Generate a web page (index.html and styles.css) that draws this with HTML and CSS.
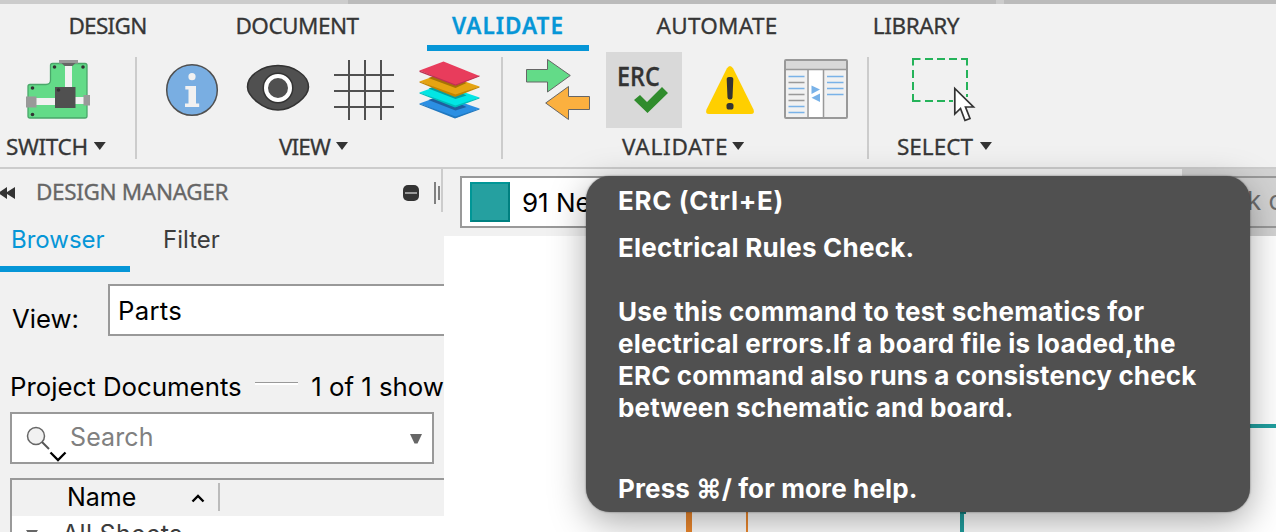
FILE: index.html
```
<!DOCTYPE html>
<html lang="en">
<head>
<meta charset="utf-8">
<title>Design Manager</title>
<link rel="stylesheet" href="styles.css">
</head>
<body>
<div class="app">
  <div class="window-strip"><span class="strip-light"></span><span class="strip-dark"></span><span class="strip-gap"></span><span class="strip-end"></span></div>
  <header class="ribbon">
    <nav class="tabs">
      <span class="tab tab-design">DESIGN</span>
      <span class="tab tab-document">DOCUMENT</span>
      <span class="tab tab-validate">VALIDATE</span>
      <span class="tab tab-automate">AUTOMATE</span>
      <span class="tab tab-library">LIBRARY</span>
    </nav>
    <div class="groups">
      <section class="group group-switch">
        <div class="icons">
          <svg class="icon" viewBox="0 0 76 76">
            <path d="M30.5 13.500 q0-2 2-2 H65 q2 0 2 2 V64 q0 2-2 2 H10 q-2 0-2-2 V34.500 q0-2 2-2 H26 q4.500 0 4.500-4.500z" fill="#63db88" stroke="#4aa76a" stroke-width="1.300"/>
            <path d="M45 12h7v24h-7zM16 46h20v7H16zM55 45h10v7H55z" fill="#f1f1f1"/>
            <path d="M39 8h19v3.500H39zM6 44.500h10.500v11H6zM63.500 43h6.500v10.500h-6.500z" fill="#999"/>
            <path d="M41.500 11h14l-3 3h-8z" fill="#666"/>
            <path d="M35 35h20.500v21H35z" fill="#505050"/>
            <g fill="#333"><circle cx="34.500" cy="15" r="1.800"/><circle cx="63" cy="15" r="1.800"/><circle cx="12.500" cy="36" r="1.800"/><circle cx="12.500" cy="62.500" r="1.800"/><circle cx="38.500" cy="38" r="1.800"/></g>
          </svg>
        </div>
        <div class="group-label"><span class="t-switch">SWITCH</span><i class="caret"></i></div>
      </section>
      <section class="group group-view">
        <div class="icons">
          <svg class="icon" viewBox="0 0 76 76">
            <circle cx="38" cy="38" r="25.300" fill="#79aee2" stroke="#505050" stroke-width="1.500"/>
            <circle cx="38" cy="24.700" r="3.600" fill="#f1f1f1"/>
            <path d="M31.300 34H42v17.500h3.200V55H31v-3.500h3.500v-14h-3.200z" fill="#f1f1f1"/>
          </svg>
          <svg class="icon" viewBox="0 0 76 76">
            <path d="M7.500 35C7.500 23 23 13.500 38 13.500S68.500 23 68.500 35C68.500 44 53 58 38 58S7.500 44 7.500 35Z" fill="#505050" stroke="#333" stroke-width="1.500"/>
            <circle cx="38" cy="36" r="13" fill="#505050" stroke="#333" stroke-width="5"/>
            <circle cx="38" cy="36" r="12" fill="#505050" stroke="#fff" stroke-width="4"/>
          </svg>
          <svg class="icon" viewBox="0 0 76 76">
            <path d="M23 8v60M39 8v60M55 8v60M8 23h60M8 39h60M8 55h60" stroke="#505050" stroke-width="2"/>
          </svg>
          <svg class="icon" viewBox="0.5 0 76 76">
            <path d="M8 51.500l22-8 38 13-24 9.500z" fill="#2b8fe3"/><path d="M8 51.500L44 64.500l24-8v1L43.500 66.500 8 52.500z" fill="#2178bf"/>
            <path d="M17 48l14-5 24 12-11 3.500z" fill="#205f9f"/>
            <path d="M8 40.500l22-8 38 13-24 9.500z" fill="#02e6e4"/><path d="M8 40.500L44 53.500l24-8v1L43.500 55.500 8 41.500z" fill="#00bdbc"/>
            <path d="M17 36.500l14-5 24 12-11 3.500z" fill="#039f9f"/>
            <path d="M8 29.500l22-8 38 13-24 9.500z" fill="#e5a412"/><path d="M8 29.500L44 42.500l24-8v1L43.500 45 8 30.500z" fill="#c28400"/>
            <path d="M17 26l14-5 24 10-11 5z" fill="#a57206"/>
            <path d="M8 18.500L32 9.500 68 24 44 33.500z" fill="#e83c5c"/><path d="M8 18.500L44 32.500l24-9v1L44 33.800 8 20z" fill="#bd3152"/>
          </svg>
        </div>
        <div class="group-label"><span class="t-view">VIEW</span><i class="caret"></i></div>
      </section>
      <section class="group group-validate">
        <div class="icons">
          <svg class="icon" viewBox="0 0 76 76" stroke="#666" stroke-width="1">
            <path d="M6.500 17.500h21V7.500L50.300 23.500 27.500 40V30h-21z" fill="#63db88"/>
            <path d="M69.500 44.500h-21v-10L25.700 51 48.500 67.500v-10h21z" fill="#fbb03f"/>
          </svg>
          <div class="icon active erc">
            <span class="erc-text">ERC</span>
            <svg class="erc-check" viewBox="0 0 36 28"><path d="M1 14l6-5 7 7L29 1l6 6-20.500 20z" fill="#308c2d"/></svg>
          </div>
          <svg class="icon" viewBox="0 0 76 76">
            <path d="M34.800 16.500Q38 11.500 41.200 16.500L61.500 57.500Q63 62 59 62H17Q13 62 14.500 57.500z" fill="#ffcf00"/>
            <path d="M37 25h2q2.500 0 2.300 2.500l-.8 18q-.2 2-2 2h-1q-1.800 0-2-2l-.8-18Q34.500 25 37 25z" fill="#333"/>
            <rect x="34.500" y="51" width="7" height="6.500" rx="2.600" fill="#333"/>
          </svg>
          <svg class="icon" viewBox="0 0 76 76">
            <rect x="7" y="8" width="62" height="58" rx="1" fill="#f1f1f1" stroke="#999" stroke-width="2"/>
            <path d="M8 9h60v8H8z" fill="#d9d9d9"/><path d="M31 18h14v47H31z" fill="#fff"/>
            <path d="M7 17.500h62M30 18v48M45.500 18v48" stroke="#999" stroke-width="1.500"/>
            <path d="M10.500 24.500h16M10.500 36.500h16M10.500 54.500h16M10.500 60.500h16M49 24.500h16.500M49 30.500h16.500M49 36.500h16.500M49 42.500h16.500" stroke="#79b2e8" stroke-width="1.700"/>
            <path d="M10.500 30.500h16M10.500 42.500h16M10.500 48.500h16" stroke="#999" stroke-width="1.700"/>
            <path d="M33.500 33.500l8.500 4-8.500 4.500zM42 41.500l-8.500 4.200 8.500 4.300z" fill="#79b2e8"/>
          </svg>
        </div>
        <div class="group-label"><span class="t-validate">VALIDATE</span><i class="caret"></i></div>
      </section>
      <section class="group group-select">
        <div class="icons">
          <svg class="icon" viewBox="1 0 76 76">
            <path d="M8 13.500V7h7.500M20 7h8M32 7h8M44 7h8M56 7h6v6.500M62 18v8M62 30v8M8 18v8M8 30v8M8 42v7h7.500M20 49h8M32 49h8M44 49h4M62 42v3" fill="none" stroke="#25b35a" stroke-width="2"/>
            <path d="M49.800 36.500V62l5.700-5.500 4.500 12 5-2-4.500-11.500h8z" fill="#fff" stroke="#333" stroke-width="1.700"/>
          </svg>
        </div>
        <div class="group-label"><span class="t-select">SELECT</span><i class="caret"></i></div>
      </section>
    </div>
  </header>
  <div class="workspace">
    <aside class="panel">
      <div class="panel-head">
        <svg class="collapse" viewBox="0 0 16 14"><path d="M7 1v12L-2 7zM15 1v12L5.500 7z" fill="#333"/></svg>
        <span class="panel-title">DESIGN MANAGER</span>
        <svg class="minimize" viewBox="0 0 16 16"><rect width="16" height="16" rx="5" fill="#333"/><path d="M2 8h12" stroke="#999" stroke-width="2"/></svg>
        <svg class="grip" viewBox="0 0 9 44"><path d="M1 13v22M5 17v14" stroke="#808080" stroke-width="2"/><path d="M8 0v43" stroke="#ccc" stroke-width="2"/></svg>
      </div>
      <div class="subtabs"><span class="subtab on"><span class="t-browser">Browser</span></span><span class="subtab"><span class="t-filter">Filter</span></span></div>
      <div class="view-row"><span class="t-viewlabel">View:</span><div class="combo"><span class="t-parts">Parts</span></div></div>
      <div class="docs-row"><span class="t-docs">Project Documents</span><i class="rule"></i><span class="t-count">1 of 1 show</span></div>
      <div class="search">
        <svg class="magnifier" viewBox="0 0 44 40"><circle cx="11" cy="14" r="8.500" fill="#f1f1f1" stroke="#666" stroke-width="1.500"/><path d="M17 20l7 7" stroke="#555" stroke-width="2"/><path d="M25.500 30.500l7.500 7.500 7.500-7.500" fill="none" stroke="#000" stroke-width="2.300"/></svg>
        <span class="t-search">Search</span>
        <svg class="drop" viewBox="0 0 12 10"><path d="M0 0h12L7.500 9.500h-3z" fill="#666"/></svg>
      </div>
      <div class="table">
        <div class="thead"><span class="t-name">Name</span><svg class="sort" viewBox="0 0 14 10"><path d="M1.500 8.500L7 3l5.500 5.500" fill="none" stroke="#000" stroke-width="2.400"/></svg><i class="col-line"></i></div>
        <div class="trow"><svg class="expand" viewBox="0 0 12 10"><path d="M0 0h12L6 9z" fill="#666"/></svg><span class="t-sheets">All Sheets</span></div>
      </div>
    </aside>
    <main class="main">
      <div class="filterbar">
        <div class="netbox"><i class="swatch"></i><span class="t-nets">91 Ne</span></div>
        <div class="cmdzone"><div class="cmdbox"><span>k c</span></div></div>
      </div>
      <svg class="canvas" viewBox="444 236 832 296">
        <path d="M689 500v40" stroke="#ed882d" stroke-width="6"/><path d="M747 500v40" stroke="#ed882d" stroke-width="2"/>
        <path d="M962 500v40M1240 426h40" stroke="#209f9f" stroke-width="4"/><path d="M960 500h6v14h-6z" fill="#168686"/>
      </svg>
    </main>
  </div>
  <div class="tooltip">
    <p class="tip-title">ERC (Ctrl+E)</p>
    <p class="tip-lead">Electrical Rules Check.</p>
    <p class="tip-body"><span class="wide">Use this command to test schematics for</span><br><span class="wide">electrical errors.If a board file is loaded,the</span><br>ERC command also runs a consistency check<br>between schematic and board.</p>
    <p class="tip-help">Press ⌘/ for more help.</p>
  </div>
</div>
</body>
</html>
```
FILE: styles.css
```
* { box-sizing: border-box; }
body { margin: 0; background: #f1f1f1; font-family: Inter, "Liberation Sans", sans-serif; }
svg { display: block; flex: none; }
i { display: block; flex: none; }
span { white-space: nowrap; }
.app { position: relative; width: 1276px; height: 532px; overflow: hidden; display: flex; flex-direction: column; }

.window-strip { display: flex; height: 4px; flex: none; }
.strip-light { width: 348px; background: #ccc; }
.strip-dark { width: 648px; background: #bbb; }
.strip-gap { width: 8px; background: #ccc; }
.strip-end { flex: 1; background: #bbb; }

.ribbon { height: 165px; flex: none; border-bottom: 2px solid #ccc; font-family: "Noto Sans", "Open Sans", sans-serif; font-size: 22.500px; color: #363636; -webkit-text-stroke: .3px; }
.tabs { display: flex; height: 47px; }
.tab { height: 47px; line-height: 43px; text-align: center; }
.tab-design { width: 125px; margin-left: 45px; letter-spacing: -.7px; }
.tab-document { width: 172px; margin-left: 41px; letter-spacing: -.5px; }
.tab-validate { width: 162px; margin-left: 44px; color: #0696d7; font-weight: 600; border-bottom: 6px solid #0696d7; letter-spacing: 1px; }
.tab-automate { width: 170px; margin-left: 43px; letter-spacing: .3px; }
.tab-library { width: 134px; margin-left: 47px; letter-spacing: -.4px; }

.groups { display: flex; height: 116px; }
.group { position: relative; height: 116px; padding-top: 1px; }
.group:not(:last-child)::after { content: ""; position: absolute; right: 0; top: 6px; width: 2px; height: 102px; background: #ccc; }
.group-switch { width: 137px; padding-left: 20px; }
.group-view { width: 366px; padding-left: 17px; }
.group-validate { width: 366px; padding-left: 17px; }
.group-select { width: 200px; padding-left: 37px; }
.icons { display: flex; gap: 10px; height: 76px; }
.icon { width: 76px; height: 76px; flex: none; }
.active { background: #d9d9d9; }
.erc { display: flex; flex-direction: column; }
.erc-text { font: 600 27.500px/28px "Open Sans", sans-serif; color: #333; margin: 10px 0 0 11px; width: 60px; transform: scaleX(.85); transform-origin: 0 0; }
.erc-check { width: 36px; height: 28px; margin: -4px 0 0 27px; }
.group-label { display: flex; align-items: center; height: 38px; gap: 6px; }
.group-label span { margin-top: -2px; }
.group-switch .group-label { margin-left: -14px; gap: 6px; letter-spacing: -.35px; }
.group-view .group-label { margin-left: 125px; gap: 6px; letter-spacing: -.9px; }
.group-validate .group-label { margin-left: 102px; gap: 4px; letter-spacing: .75px; }
.group-select .group-label { margin-left: -9px; gap: 7px; }
.caret { width: 12px; height: 8px; background: #333; clip-path: polygon(0 0, 100% 0, 50% 100%); margin-top: -2px; }

.workspace { display: flex; flex: 1; min-height: 0; }
.panel { width: 444px; flex: none; overflow: hidden; font-size: 25px; color: #000; }
.panel-head { display: flex; height: 47px; align-items: center; color: #666; }
.collapse { width: 16px; height: 14px; }
.panel-title { font-family: "Noto Sans", sans-serif; font-size: 22.500px; letter-spacing: -.35px; width: 367px; padding-left: 20px; margin-top: -2px; -webkit-text-stroke: .3px; }
.minimize { width: 16px; height: 16px; margin-left: 20px; }
.grip { width: 9px; height: 44px; margin-left: 15px; align-self: flex-start; }
.subtabs { display: flex; height: 56px; font-size: 24px; line-height: 48px; color: #3c3c3c; }
.subtab { width: 130px; }
.subtab.on { color: #0696d7; padding-left: 11px; border-bottom: 6px solid #0696d7; }
.subtab + .subtab { padding-left: 33px; }
.view-row { display: flex; height: 64px; padding-top: 12px; line-height: 70px; padding-left: 12px; font-size: 25.700px; }
.combo { margin-left: auto; width: 336px; height: 52px; border: 2px solid #999; border-right: 0; background: #fff; line-height: 50px; padding-left: 8px; }
.t-parts { letter-spacing: .3px; }
.docs-row { display: flex; height: 76px; padding: 26px 0 0 10px; line-height: 50px; font-size: 25.800px; }
.t-docs { width: 246px; }
.rule { width: 43px; height: 3px; margin-top: 20px; background: #fff; border-top: 1px solid #999; }
.t-count { margin-left: 13px; }
.search { display: flex; width: 424px; height: 52px; margin-left: 10px; border: 2px solid #999; background: #fff; color: #808080; line-height: 46px; }
.magnifier { width: 44px; height: 40px; margin: 8px 0 0 13px; overflow: visible; }
.t-search { margin-left: 1px; letter-spacing: .1px; }
.drop { width: 12px; height: 10px; margin: 20px 10px 0 auto; }
.table { margin: 14px 0 0 10px; border: solid #999; border-width: 2px 0 0 2px; height: 60px; background: #fff; }
.thead { display: flex; height: 36px; background: #f1f1f1; line-height: 34px; padding-left: 55px; }
.t-name { width: 124px; }
.sort { width: 14px; height: 10px; margin-top: 13px; }
.col-line { width: 2px; height: 28px; margin: 3px 0 0 13px; background: #bbb; }
.trow { display: flex; color: #3c3c3c; line-height: 36px; padding-left: 14px; }
.expand { width: 12px; height: 10px; margin-top: 14px; }
.t-sheets { margin-left: 24px; letter-spacing: .3px; }

.main { flex: 1; min-width: 0; background: #fff; }
.filterbar { display: flex; height: 67px; background: #f1f1f1; padding-left: 16px; font-size: 26px; }
.netbox { display: flex; flex: none; width: 722px; height: 52px; margin-top: 7px; border: 2px solid #999; background: #fff; padding: 4px 8px; line-height: 42px; }
.swatch { width: 40px; height: 40px; margin-right: 12px; background: #25a0a0; border: 2px solid; border-color: #009696 #008080 #008080 #009696; }
.cmdzone { flex: 1; min-width: 0; background: #d2d2d2; padding-top: 7px; }
.cmdbox { height: 52px; border: solid #999; border-width: 2px 0; padding-left: 65px; line-height: 46px; color: #6c6c6c; overflow: hidden; }
.canvas { width: 832px; height: 296px; }

.tooltip { position: absolute; left: 586px; top: 176px; width: 664px; height: 336px; border-radius: 24px; background: #505050; box-shadow: 0 0 2px rgba(0,0,0,.5), 0 10px 36px rgba(0,0,0,.34); color: #fff; font-size: 26px; font-weight: 700; line-height: 32px; padding: 9px 32px; letter-spacing: .13px; }
.tooltip p { margin: 0; }
.tooltip .wide { letter-spacing: .24px; }
.tooltip .tip-title { letter-spacing: .65px; }
.tooltip .tip-lead { margin-top: 15px; letter-spacing: .22px; }
.tooltip .tip-body { margin-top: 32px; }
.tooltip .tip-help { margin-top: 49px; }
```
